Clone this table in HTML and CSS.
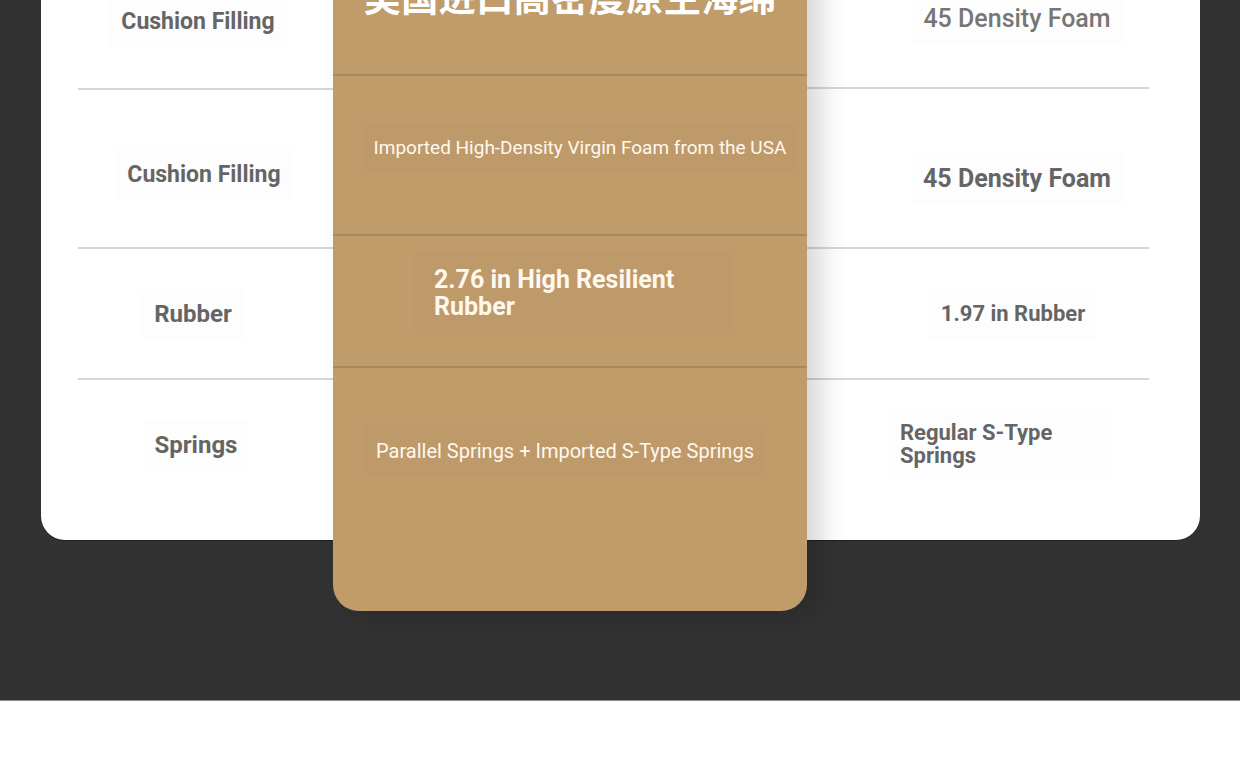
FILE: index.html
```html
<!DOCTYPE html>
<html lang="en">
<head>
    <meta charset="UTF-8">
    <meta name="viewport" content="width=device-width, initial-scale=1.0">
    <title>Sofa Comparison</title>
    <link rel="stylesheet" href="styles.css">
</head>
<body>
    <section class="compare">
        <div class="card">
            <div class="col col-left">
                <div class="row row-1"><span class="label">Cushion Filling</span></div>
                <div class="row row-2"><span class="label">Cushion Filling</span></div>
                <div class="row row-3"><span class="label">Rubber</span></div>
                <div class="row row-4"><span class="label">Springs</span></div>
            </div>

            <div class="col col-gold">
                <div class="row row-1"><span class="gold-title">美国进口高密度原生海绵</span></div>
                <div class="row row-2"><span class="gold-label">Imported High-Density Virgin Foam from the USA</span></div>
                <div class="row row-3"><span class="gold-label gold-bold">2.76 in High Resilient Rubber</span></div>
                <div class="row row-4"><span class="gold-label gold-big">Parallel Springs + Imported S-Type Springs</span></div>
            </div>

            <div class="col col-right">
                <div class="row row-1"><span class="label label-medium">45 Density Foam</span></div>
                <div class="row row-2"><span class="label label-big">45 Density Foam</span></div>
                <div class="row row-3"><span class="label">1.97 in Rubber</span></div>
                <div class="row row-4"><span class="label label-wrap">Regular S-Type Springs</span></div>
            </div>
        </div>
    </section>
    <div class="after"></div>
</body>
</html>
```

FILE: styles.css
```css
body {
    margin: 0;
    padding: 0;
    font-family: Roboto, 'Noto Sans', Arial, sans-serif;
    background: #ffffff;
}
.compare {
    background: #323232;
    height: 700px;
    border-bottom: 1px solid #8c8c8c;
    padding: 0 40px 0 41px;
    overflow: hidden;
}
.card {
    display: flex;
    background: #ffffff;
    border-radius: 0 0 24px 24px;
    margin-top: -70px;
    box-shadow: 0 1px 0 rgba(0, 0, 0, 0.35);
    height: 610px;
}
.col {
    display: flex;
    flex-direction: column;
}
.col-left {
    width: 255px;
    padding-left: 37px;
}
.col-right {
    width: 342px;
    padding-right: 51px;
}
.col-gold {
    width: 474px;
    background: #c09c6b;
    margin-top: -13px;
    height: 694px;
    border-radius: 0 0 26px 26px;
    box-shadow: 14px 6px 26px rgba(0, 0, 0, 0.16);
    position: relative;
    z-index: 1;
}
.row {
    display: flex;
    align-items: center;
    justify-content: center;
    box-sizing: border-box;
    border-bottom: 2px solid #d6d6d6;
}
.col-gold .row {
    border-bottom-color: #a68a5f;
}
.row-1 { height: 160px; }
.row-2 { height: 160px; }
.row-3 { height: 132px; }
.row-4 { height: 160px; border-bottom: none; }

.col-left .row-1 { padding-top: 26px; padding-right: 15px; }
.col-left .row-2 { padding-top: 14px; padding-right: 3px; }
.col-left .row-3 { padding-right: 25px; }
.col-left .row-4 { padding-bottom: 30px; padding-right: 19px; }

.col-right .row { padding-left: 78px; }
.col-right .row-1 { padding-top: 20px; }
.col-right .row-2 { padding-top: 22px; }
.col-right .row-3 { padding-left: 70px; }
.col-right .row-4 { padding-left: 74px; padding-bottom: 32px; }

.col-gold .row-2 { padding: 0 0 14px 20px; }
.col-gold .row-3 { padding-bottom: 16px; }
.col-gold .row-4 { height: 244px; padding: 0 10px 76px 0; }

.label {
    font-size: 24px;
    font-weight: 700;
    color: #656565;
    background: #fdfdfd;
    padding: 12px 12px;
    line-height: 26px;
}
.col-left .row-1 .label,
.col-left .row-2 .label {
    font-size: 23px;
}
.label-medium {
    font-weight: 500;
    font-size: 25px;
    color: #767676;
}
.label-big {
    font-size: 25px;
}
.col-right .row-3 .label {
    font-size: 22px;
}
.label-wrap {
    width: 200px;
    font-size: 22px;
    line-height: 23px;
    margin-right: 30px;
}
.gold-title {
    font-family: 'Noto Sans CJK SC', sans-serif;
    font-size: 37px;
    font-weight: 700;
    color: #ffffff;
    letter-spacing: 0.5px;
}
.gold-label {
    font-size: 19px;
    color: #fff8ee;
    background: rgba(0, 0, 0, 0.008);
    padding: 14px 12px;
    line-height: 22px;
}
.gold-big {
    font-size: 20px;
}
.gold-bold {
    font-size: 25px;
    font-weight: 700;
    line-height: 27px;
    width: 280px;
    padding: 14px 20px;
    margin-left: 8px;
}
.after {
    height: 80px;
}
```
